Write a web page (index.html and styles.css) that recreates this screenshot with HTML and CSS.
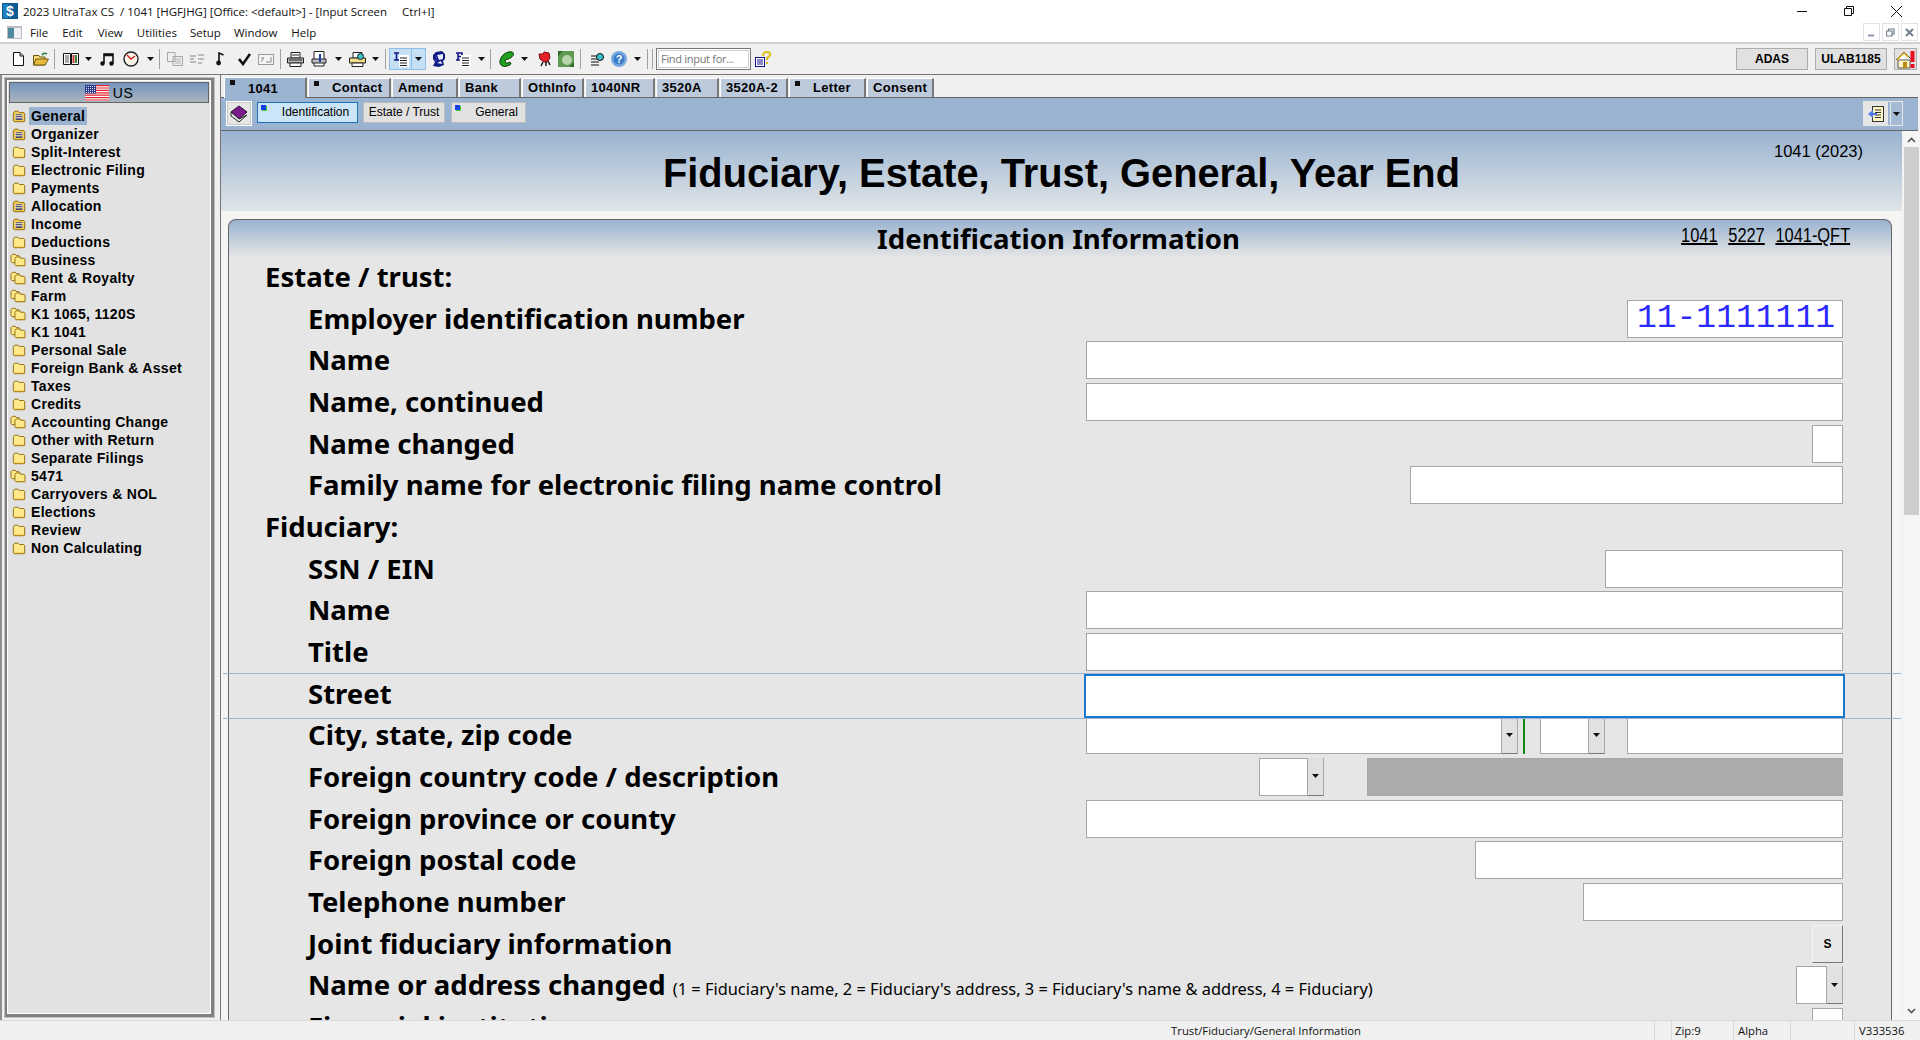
FILE: index.html
```html
<!DOCTYPE html>
<html lang="en">
<head>
    <meta charset="UTF-8">
    <title>2023 UltraTax CS / 1041 [HGFJHG]</title>
    <link rel="stylesheet" href="styles.css">
</head>
<body>
    <svg class="defs" width="0" height="0">
        <symbol id="folder-plain" viewBox="0 0 16 16">
            <path d="M1.5 4.5 L3 2.5 H7 L8.5 4 H13.5 L14.5 5 V14 L13.5 14.5 H2.5 L1.5 13.5 Z" fill="#ffe98a" stroke="#8a6400"/>
            <path d="M2.5 13.5 H14.5 V14.5 H2.5 Z" fill="#b88a10"/>
        </symbol>
        <symbol id="folder-doc" viewBox="0 0 16 16">
            <path d="M1.5 4.5 L3 2.5 H7 L8.5 4 H13.5 L14.5 5 V14 L13.5 14.5 H2.5 L1.5 13.5 Z" fill="#f2c84a" stroke="#8a6400"/>
            <path d="M3.5 5.5 H12.5 V12.5 H3.5 Z" fill="#fff6c8"/>
            <path d="M4 6.5 H12 M4 8.5 H12 M4 10.5 H12 M4 12 H12" stroke="#30306a"/>
        </symbol>
        <symbol id="folder-multi" viewBox="0 0 18 16">
            <path d="M1 3 L2.5 1.5 H6 L7 3 H10 L11 4 V11 H2 L1 10 Z" fill="#ffe98a" stroke="#8a6400"/>
            <path d="M5.5 6 L7 4.5 H11 L12 6 H16 L17 7 V14.5 H6.5 L5.5 13.5 Z" fill="#ffe98a" stroke="#8a6400"/>
            <path d="M6.5 14 H17 V15 H6.5 Z" fill="#b88a10"/>
        </symbol>
        <symbol id="caret" viewBox="0 0 7 4">
            <path d="M0 0 H7 L3.5 4 Z" fill="#111"/>
        </symbol>
    </svg>

    <div class="titlebar">
        <svg class="app-icon" width="16" height="16" viewBox="0 0 16 16"><rect width="16" height="16" fill="#0f5c94"/><rect x="1" y="1" width="5" height="14" fill="#1c7fc0"/><text x="8" y="13" class="app-s">$</text></svg>
        <span class="title-text">2023 UltraTax CS &nbsp;/ 1041 [HGFJHG] [Office: &lt;default&gt;] - [Input Screen &nbsp; &nbsp; Ctrl+I]</span>
        <div class="win-btns">
            <svg width="11" height="11" viewBox="0 0 11 11"><path d="M0 5.5 H10" stroke="#111"/></svg>
            <svg width="11" height="11" viewBox="0 0 11 11"><path d="M.5 2.5 H7.5 V9.5 H.5 Z M2.5 2.5 V.5 H9.5 V7.5 H7.5" fill="none" stroke="#111"/></svg>
            <svg width="11" height="11" viewBox="0 0 11 11"><path d="M0 0 L11 11 M11 0 L0 11" stroke="#111"/></svg>
        </div>
    </div>

    <div class="menubar">
        <svg class="mdi-icon" width="15" height="13" viewBox="0 0 15 13"><rect width="15" height="13" fill="#b9bcc4"/><rect x="1" y="2" width="6" height="10" fill="#4f8a9c"/><rect x="7" y="2" width="7" height="10" fill="#eef0f4"/></svg>
        <span class="menu m1">File</span>
        <span class="menu m2">Edit</span>
        <span class="menu m3">View</span>
        <span class="menu m4">Utilities</span>
        <span class="menu m5">Setup</span>
        <span class="menu m6">Window</span>
        <span class="menu m7">Help</span>
        <div class="mdi-btns">
            <span class="mdi-btn"><svg width="9" height="9" viewBox="0 0 9 9"><path d="M1 7.5 H7" stroke="#8a97a8" stroke-width="2"/></svg></span>
            <span class="mdi-btn"><svg width="9" height="9" viewBox="0 0 9 9"><path d="M.5 3 H6 V8 H.5 Z M2.5 3 V1 H8 V6 H6" fill="none" stroke="#6f7d90" stroke-width="1.2"/></svg></span>
            <span class="mdi-btn"><svg width="9" height="9" viewBox="0 0 9 9"><path d="M1 1 L8 8 M8 1 L1 8" stroke="#6f7d90" stroke-width="2"/></svg></span>
        </div>
    </div>

    <div class="toolbar">
        <svg class="tool" width="14" height="14" viewBox="0 0 14 14"><path d="M2.5 .5 H9 L12.5 4 V13.5 H2.5 Z" fill="#fff" stroke="#111"/><path d="M9 .5 V4 H12.5" fill="none" stroke="#111"/></svg>
        <svg class="tool g8" width="16" height="14" viewBox="0 0 16 14"><path d="M.5 3.5 H6 L7 5 H12 V13 H.5 Z" fill="#f7d772" stroke="#6b5a10"/><path d="M.5 13 L3 7 H15.5 L12 13 Z" fill="#e9b93c" stroke="#6b5a10"/><path d="M9 3 Q11 0 14 2" fill="none" stroke="#1a7a2c" stroke-width="1.5"/></svg>
        <i class="sep g5"></i>
        <svg class="tool g8" width="16" height="14" viewBox="0 0 16 14"><path d="M.5 1.5 H7.5 V12.5 H.5 Z M8.5 1.5 H15.5 V12.5 H8.5 Z" fill="#fff" stroke="#111"/><path d="M2 4 H6 M2 6 H6 M2 8 H6 M2 10 H6" stroke="#555"/><path d="M13 3 V11" stroke="#3a8a3a" stroke-width="2"/><path d="M10.5 3 V11" stroke="#c33" stroke-width="2"/></svg>
        <svg class="caret g6" width="7" height="4"><use href="#caret"/></svg>
        <svg class="tool g8" width="14" height="14" viewBox="0 0 14 14"><path d="M4 11 V2 H13 V11" fill="none" stroke="#111" stroke-width="1.6"/><circle cx="2.5" cy="11.5" r="2.2" fill="#111"/><circle cx="11.5" cy="11.5" r="2.2" fill="#111"/><path d="M4 3 H13" stroke="#111" stroke-width="2.5"/></svg>
        <svg class="tool g9" width="16" height="16" viewBox="0 0 16 16"><circle cx="8" cy="8" r="7" fill="#fff4e8" stroke="#222" stroke-width="1.4"/><path d="M4 4 L8 8 L12 5" fill="none" stroke="#c22" stroke-width="1.4"/></svg>
        <svg class="caret g8" width="7" height="4"><use href="#caret"/></svg>
        <i class="sep g5"></i>
        <svg class="tool g7" width="16" height="14" viewBox="0 0 16 14"><path d="M.5 .5 H8 V9.5 H.5 Z M6 4.5 H15.5 V13.5 H6 Z" fill="#f0f0f0" stroke="#a5a5a5"/><path d="M8 7 H14 M8 9 H14 M8 11 H14" stroke="#b5b5b5"/></svg>
        <svg class="tool g6" width="16" height="14" viewBox="0 0 16 14"><path d="M1 4 H7 M1 7 H5 M1 10 H7 M9 7 H15 M9 3 H15 M9 11 H13" stroke="#a8a8a8" stroke-width="1.3"/></svg>
        <svg class="tool g11" width="8" height="14" viewBox="0 0 8 14"><path d="M3 11 V1 L7.5 3" fill="none" stroke="#111" stroke-width="1.6"/><circle cx="2.6" cy="11" r="2.4" fill="#111"/></svg>
        <svg class="tool g14" width="13" height="14" viewBox="0 0 13 14"><path d="M1 7 L5 12 L12 2" fill="none" stroke="#111" stroke-width="2.6"/></svg>
        <svg class="tool g7" width="16" height="13" viewBox="0 0 16 13"><rect x=".5" y="1.5" width="15" height="10" fill="#f4f4f4" stroke="#9a9a9a"/><path d="M3 9 L6 5 H3 M13 4 V9 H8" fill="none" stroke="#8a8a8a"/></svg>
        <i class="sep g6"></i>
        <svg class="tool g6" width="17" height="15" viewBox="0 0 17 15"><path d="M4 .5 H13 V6 H4 Z" fill="#fff" stroke="#222"/><path d="M.5 6 H16.5 V11 H.5 Z" fill="#bbb" stroke="#222"/><path d="M3 11 H14 V14.5 H3 Z" fill="#fff" stroke="#222"/><path d="M5 3 H12 M2 8 H15" stroke="#222"/></svg>
        <svg class="tool g7" width="16" height="16" viewBox="0 0 16 16"><path d="M3 .5 H13 V15 H3 Z" fill="#fff" stroke="#222"/><path d="M1 8 H15 V12 H1 Z" fill="#bbb" stroke="#222"/><path d="M9 3 V11" stroke="#1a3ca8" stroke-width="2"/></svg>
        <svg class="caret g8" width="7" height="4"><use href="#caret"/></svg>
        <svg class="tool g7" width="17" height="15" viewBox="0 0 17 15"><path d="M4 .5 H13 V6 H4 Z" fill="#fff" stroke="#222"/><path d="M.5 6 H16.5 V11 H.5 Z" fill="#f2dc8c" stroke="#222"/><path d="M3 11 H14 V14.5 H3 Z" fill="#fff" stroke="#222"/><circle cx="11.5" cy="4.5" r="3" fill="#3cc3c8" stroke="#222"/></svg>
        <svg class="caret g6" width="7" height="4"><use href="#caret"/></svg>
        <i class="sep g6"></i>
        <div class="toggle g3">
            <span class="toggle-main">
                <svg width="16" height="16" viewBox="0 0 16 16"><rect x="6" y="4" width="10" height="12" fill="#fff"/><path d="M1 2 H6 M3.5 2 V9 M1 9 H6" stroke="#14148c" stroke-width="1.6"/><path d="M7 7 H14 M7 9.5 H14 M7 12 H14 M7 14.5 H14" stroke="#222"/></svg>
            </span>
            <span class="toggle-arrow"><svg width="7" height="4"><use href="#caret"/></svg></span>
        </div>
        <svg class="tool g6" width="14" height="16" viewBox="0 0 14 16"><path d="M4 1 L10 0 L13 3 L13 8 L11 10 L12 14 L7 16 L1 15 L3 11 L1 8 L1 4 Z" fill="#101a80"/><path d="M5 4 L11 3 L11 8 L7 9 Z M5 12 L9 10 L10 13 Z" fill="#e8ecff"/><path d="M3 6 L5 7 M3 9 L5 10" stroke="#4a5ad8"/></svg>
        <svg class="tool g9" width="16" height="16" viewBox="0 0 16 16"><rect x="6" y="4" width="10" height="12" fill="#fff"/><path d="M1 2 H7 V4 M3 2 V9 M1 9 H5 M3 5.5 H6" fill="none" stroke="#14148c" stroke-width="1.6"/><path d="M7 7 H14 M7 9.5 H14 M7 12 H14 M7 14.5 H14" stroke="#222"/></svg>
        <svg class="caret g7" width="7" height="4"><use href="#caret"/></svg>
        <i class="sep g5"></i>
        <svg class="tool g8" width="16" height="16" viewBox="0 0 16 16"><path d="M1 10 C2 4 8 0 13 1 C16 2 15 7 6 9 C6 12 8 13 11 11 L12 13 C7 17 0 16 1 10 Z" fill="#1fa01f" stroke="#0a3c0a"/></svg>
        <svg class="caret g6" width="7" height="4"><use href="#caret"/></svg>
        <svg class="tool g10" width="13" height="16" viewBox="0 0 13 16"><path d="M1 3 L5 3 L6 1 L11 2 L12 7 L9 11 L6 11 L2 8 Z" fill="#e3202a" stroke="#7a0b10"/><path d="M5 11 L3 15 M8 11 L8 15 M10 10 L12 14" stroke="#111" stroke-width="1.4"/></svg>
        <svg class="tool g7" width="16" height="16" viewBox="0 0 16 16"><rect width="16" height="16" fill="#5d9a52"/><circle cx="9" cy="9" r="5" fill="#b7d4ac"/><path d="M0 0 H5 L0 5 Z M16 16 H11 L16 11 Z" fill="#2c6a2a"/></svg>
        <i class="sep g6"></i>
        <svg class="tool g9" width="15" height="15" viewBox="0 0 15 15"><path d="M1 4 H8 M1 7 H8 M1 10 H9 M1 13 H9" stroke="#111"/><circle cx="10" cy="5" r="3.5" fill="#3cc3c8" stroke="#111"/></svg>
        <svg class="tool g6" width="16" height="16" viewBox="0 0 16 16"><circle cx="8" cy="8" r="8" fill="#7aa8e0"/><circle cx="8" cy="8" r="5.5" fill="#3a7cc8"/><text x="8" y="12" class="help-q">?</text></svg>
        <svg class="caret g7" width="7" height="4"><use href="#caret"/></svg>
        <i class="sep g6"></i>
        <i class="sep g4"></i>
        <div class="find g3"><span class="find-inner">Find input for...</span></div>
        <svg class="tool g4" width="17" height="16" viewBox="0 0 17 16"><rect x=".5" y="6.5" width="9" height="9" fill="#fff" stroke="#14148c"/><path d="M2 9 H8 M2 11 H8 M2 13 H8" stroke="#14148c"/><path d="M8 5 Q8 1 12 1 Q16 1 15 4 Q14 6 12 7 V9 M12 11 V13" fill="none" stroke="#e0c020" stroke-width="2"/></svg>
        <div class="tool-right">
            <span class="user-btn">ADAS</span>
            <span class="user-btn">ULAB1185</span>
            <span class="home-btn">
                <svg width="21" height="19" viewBox="0 0 21 19"><path d="M1 10 L9 2 L17 10" fill="#fff" stroke="#333"/><path d="M3 10 H15 V18 H3 Z" fill="#fff6c8" stroke="#555"/><rect x="8" y="12" width="4" height="6" fill="#b88a10"/><path d="M2 10 L9 3 L13 7" fill="none" stroke="#e8b820" stroke-width="1.5"/><rect x="15.5" y="1" width="4" height="11" fill="#e81020"/><rect x="15.5" y="14" width="4" height="4" fill="#e81020"/></svg>
            </span>
        </div>
    </div>

    <div class="main">
        <aside class="side">
            <div class="side-inner">
                <div class="side-head">
                    <svg width="24" height="16" viewBox="0 0 24 16">
                        <rect width="24" height="16" fill="#fff"/>
                        <path d="M0 .6 H24 M0 3 H24 M0 5.4 H24 M0 7.8 H24 M0 10.2 H24 M0 12.6 H24 M0 15 H24" stroke="#e0202c" stroke-width="1.2"/>
                        <rect width="11" height="8.5" fill="#2c3a8c"/>
                        <path d="M1 1.5 H10 M1 3.5 H10 M1 5.5 H10 M1 7.5 H10" stroke="#dfe3f5" stroke-dasharray="1 1"/>
                    </svg>
                    <span>US</span>
                </div>
                <ul class="tree">
                    <li><svg width="14" height="14"><use href="#folder-doc"/></svg><span class="sel">General</span></li>
                    <li><svg width="14" height="14"><use href="#folder-doc"/></svg><span>Organizer</span></li>
                    <li><svg width="14" height="14"><use href="#folder-plain"/></svg><span>Split-Interest</span></li>
                    <li><svg width="14" height="14"><use href="#folder-plain"/></svg><span>Electronic Filing</span></li>
                    <li><svg width="14" height="14"><use href="#folder-plain"/></svg><span>Payments</span></li>
                    <li><svg width="14" height="14"><use href="#folder-doc"/></svg><span>Allocation</span></li>
                    <li><svg width="14" height="14"><use href="#folder-doc"/></svg><span>Income</span></li>
                    <li><svg width="14" height="14"><use href="#folder-plain"/></svg><span>Deductions</span></li>
                    <li class="multi"><svg width="16" height="14"><use href="#folder-multi"/></svg><span>Business</span></li>
                    <li class="multi"><svg width="16" height="14"><use href="#folder-multi"/></svg><span>Rent &amp; Royalty</span></li>
                    <li class="multi"><svg width="16" height="14"><use href="#folder-multi"/></svg><span>Farm</span></li>
                    <li class="multi"><svg width="16" height="14"><use href="#folder-multi"/></svg><span>K1 1065, 1120S</span></li>
                    <li class="multi"><svg width="16" height="14"><use href="#folder-multi"/></svg><span>K1 1041</span></li>
                    <li><svg width="14" height="14"><use href="#folder-plain"/></svg><span>Personal Sale</span></li>
                    <li><svg width="14" height="14"><use href="#folder-plain"/></svg><span>Foreign Bank &amp; Asset</span></li>
                    <li><svg width="14" height="14"><use href="#folder-plain"/></svg><span>Taxes</span></li>
                    <li><svg width="14" height="14"><use href="#folder-plain"/></svg><span>Credits</span></li>
                    <li class="multi"><svg width="16" height="14"><use href="#folder-multi"/></svg><span>Accounting Change</span></li>
                    <li><svg width="14" height="14"><use href="#folder-plain"/></svg><span>Other with Return</span></li>
                    <li><svg width="14" height="14"><use href="#folder-plain"/></svg><span>Separate Filings</span></li>
                    <li class="multi"><svg width="16" height="14"><use href="#folder-multi"/></svg><span>5471</span></li>
                    <li><svg width="14" height="14"><use href="#folder-plain"/></svg><span>Carryovers &amp; NOL</span></li>
                    <li><svg width="14" height="14"><use href="#folder-plain"/></svg><span>Elections</span></li>
                    <li><svg width="14" height="14"><use href="#folder-plain"/></svg><span>Review</span></li>
                    <li><svg width="14" height="14"><use href="#folder-plain"/></svg><span>Non Calculating</span></li>
                </ul>
            </div>
        </aside>

        <section class="work">
            <div class="tabs">
                <span class="tab active tab-1041 marked">1041</span>
                <span class="tab tab-contact marked">Contact</span>
                <span class="tab tab-amend">Amend</span>
                <span class="tab tab-bank">Bank</span>
                <span class="tab tab-oth">OthInfo</span>
                <span class="tab tab-nr">1040NR</span>
                <span class="tab tab-a">3520A</span>
                <span class="tab tab-a2">3520A-2</span>
                <span class="tab tab-letter marked">Letter</span>
                <span class="tab tab-consent">Consent</span>
            </div>
            <div class="band">
                <span class="book-btn">
                    <svg width="18" height="18" viewBox="0 0 18 18"><path d="M1 7 L9 1 L17 7 L9 14 Z" fill="#7a1a8c" stroke="#2a0a30"/><path d="M1 7 V11 L9 17 L17 10 L9 14 Z" fill="#e8e8e8" stroke="#222"/></svg>
                </span>
                <span class="sub active marked-sub">Identification</span>
                <span class="sub sub-estate">Estate / Trust</span>
                <span class="sub sub-general marked-sub">General</span>
                <div class="band-right">
                    <span class="doc-btn">
                        <svg width="16" height="16" viewBox="0 0 16 16"><rect x="4.5" y=".5" width="11" height="15" fill="#fff6c8" stroke="#333"/><path d="M7 4 H13 M7 6.5 H13 M7 9 H13 M7 11.5 H13" stroke="#333"/><path d="M0 8 L5 4 V12 Z M4 7 H9 V9 H4 Z" fill="#4a78e8"/></svg>
                    </span>
                    <span class="doc-arrow"><svg width="7" height="4"><use href="#caret"/></svg></span>
                </div>
            </div>
            <div class="content">
                <div class="form-area">
                    <div class="page-head">
                        <h1>Fiduciary, Estate, Trust, General, Year End</h1>
                        <span class="form-year">1041 (2023)</span>
                    </div>
                    <div class="card">
                        <div class="card-head">
                            <h2>Identification Information</h2>
                            <div class="form-links"><a>1041</a><a>5227</a><a>1041-QFT</a></div>
                        </div>
                        <div class="rows">
                            <div class="row"><span class="group-label">Estate / trust:</span></div>
                            <div class="row"><span class="label">Employer identification number</span><span class="field w-ein ein">11-1111111</span></div>
                            <div class="row"><span class="label">Name</span><span class="field w-full"></span></div>
                            <div class="row"><span class="label">Name, continued</span><span class="field w-full"></span></div>
                            <div class="row"><span class="label">Name changed</span><span class="field w-check"></span></div>
                            <div class="row"><span class="label">Family name for electronic filing name control</span><span class="field w-family"></span></div>
                            <div class="row"><span class="group-label">Fiduciary:</span></div>
                            <div class="row"><span class="label">SSN / EIN</span><span class="field w-ssn"></span></div>
                            <div class="row"><span class="label">Name</span><span class="field w-full"></span></div>
                            <div class="row"><span class="label">Title</span><span class="field w-full"></span></div>
                            <div class="row focused"><span class="label">Street</span><span class="field w-focus"></span></div>
                            <div class="row"><span class="label">City, state, zip code</span>
                                <div class="city">
                                    <span class="combo"><span class="field w-city"></span><span class="arrow"><svg width="7" height="4"><use href="#caret"/></svg></span></span>
                                    <i class="green-line"></i>
                                    <span class="combo state"><span class="field w-state"></span><span class="arrow"><svg width="7" height="4"><use href="#caret"/></svg></span></span>
                                    <span class="field w-zip"></span>
                                </div>
                            </div>
                            <div class="row"><span class="label">Foreign country code / description</span>
                                <div class="city">
                                    <span class="combo"><span class="field w-state"></span><span class="arrow"><svg width="7" height="4"><use href="#caret"/></svg></span></span>
                                    <span class="grey-field"></span>
                                </div>
                            </div>
                            <div class="row"><span class="label">Foreign province or county</span><span class="field w-full"></span></div>
                            <div class="row"><span class="label">Foreign postal code</span><span class="field w-postal"></span></div>
                            <div class="row"><span class="label">Telephone number</span><span class="field w-phone"></span></div>
                            <div class="row"><span class="label">Joint fiduciary information</span><span class="s-btn">S</span></div>
                            <div class="row"><span class="label">Name or address changed <small>(1 = Fiduciary's name, 2 = Fiduciary's address, 3 = Fiduciary's name &amp; address, 4 = Fiduciary)</small></span>
                                <span class="combo"><span class="field w-small"></span><span class="arrow"><svg width="7" height="4"><use href="#caret"/></svg></span></span>
                            </div>
                            <div class="row"><span class="label">Financial institution</span><span class="field w-check"></span></div>
                        </div>
                    </div>
                </div>
                <div class="scrollbar">
                    <svg width="9" height="6" viewBox="0 0 9 6"><path d="M1 5 L4.5 1.5 L8 5" fill="none" stroke="#555" stroke-width="1.6"/></svg>
                    <div class="thumb"></div>
                    <svg class="scroll-down" width="9" height="6" viewBox="0 0 9 6"><path d="M1 1 L4.5 4.5 L8 1" fill="none" stroke="#555" stroke-width="1.6"/></svg>
                </div>
            </div>
        </section>
    </div>

    <div class="statusbar">
        <span class="st st-path">Trust/Fiduciary/General Information</span>
        <span class="st st-blank"></span>
        <span class="st st-zip">Zip:9</span>
        <span class="st st-alpha">Alpha</span>
        <span class="st st-blank2"></span>
        <span class="st st-ver">V333536</span>
    </div>
</body>
</html>
```

FILE: styles.css
```css
/* Global */
* {
    box-sizing: border-box;
}
html, body {
    margin: 0;
    padding: 0;
    height: 1040px;
    overflow: hidden;
}
body {
    display: flex;
    flex-direction: column;
    width: 1920px;
    font-family: "Liberation Sans", Arial, sans-serif;
    background: #f0f0f0;
    color: #000;
}
.defs {
    position: absolute;
}

/* Title and menu */
.titlebar {
    height: 22px;
    background: #fff;
    display: flex;
    align-items: center;
    padding-left: 2px;
    flex: none;
}
.app-s {
    font: bold 14px "Liberation Sans", sans-serif;
    fill: #fff;
    text-anchor: middle;
}
.help-q {
    font: bold 11px "Liberation Sans", sans-serif;
    fill: #fff;
    text-anchor: middle;
}
.title-text {
    margin-left: 5px;
    font: 11.5px "Open Sans", sans-serif;
    white-space: nowrap;
    color: #111;
}
.win-btns {
    margin-left: auto;
    display: flex;
    gap: 36px;
    padding-right: 18px;
}
.menubar {
    height: 20px;
    background: #fff;
    display: flex;
    align-items: center;
    flex: none;
    font: 11.5px "Open Sans", sans-serif;
}
.mdi-icon {
    margin-left: 7px;
}
.menu {
    color: #111;
}
.m1 { margin-left: 8px; }
.m2 { margin-left: 14px; }
.m3 { margin-left: 15px; }
.m4 { margin-left: 14px; }
.m5 { margin-left: 13px; }
.m6 { margin-left: 13px; }
.m7 { margin-left: 14px; }
.mdi-btns {
    margin-left: auto;
    display: flex;
    gap: 2px;
    padding-right: 2px;
}
.mdi-btn {
    width: 17px;
    height: 18px;
    border: 1px solid #dfe3e8;
    background: #fff;
    display: flex;
    align-items: center;
    justify-content: center;
}

/* Toolbar */
.toolbar {
    height: 33px;
    flex: none;
    background: #f0f0f0;
    border-top: 2px solid #d0d0d0;
    border-bottom: 1px solid #777;
    display: flex;
    align-items: center;
    padding-left: 11px;
}
.tool, .caret, .sep, .toggle, .find {
    flex: none;
}
.sep {
    width: 1px;
    height: 20px;
    background: #a0a0a0;
}
.g3 { margin-left: 3px; }
.g4 { margin-left: 4px; }
.g5 { margin-left: 5px; }
.g6 { margin-left: 6px; }
.g7 { margin-left: 7px; }
.g8 { margin-left: 8px; }
.g9 { margin-left: 9px; }
.g10 { margin-left: 10px; }
.g11 { margin-left: 11px; }
.g14 { margin-left: 14px; }
.toggle {
    width: 37px;
    height: 22px;
    display: flex;
    background: #c5dff5;
    border: 1px solid #8ebde8;
}
.toggle-main {
    width: 22px;
    display: flex;
    align-items: center;
    justify-content: center;
    border-right: 1px solid #8ebde8;
}
.toggle-arrow {
    flex: 1;
    display: flex;
    align-items: center;
    justify-content: center;
}
.find {
    width: 95px;
    height: 22px;
    border: 1px solid #777;
    padding: 1px;
    background: #fff;
}
.find-inner {
    display: block;
    height: 18px;
    border: 1px solid #cfcfcf;
    font: 11px/16px "Open Sans", sans-serif;
    letter-spacing: -.3px;
    color: #777;
    padding-left: 2px;
    white-space: nowrap;
    overflow: hidden;
}
.tool-right {
    margin-left: auto;
    display: flex;
    gap: 7px;
    padding-right: 3px;
}
.user-btn {
    width: 72px;
    height: 22px;
    background: #e1e1e1;
    border: 1px solid #adadad;
    font-weight: bold;
    font-size: 12px;
    line-height: 20px;
    text-align: center;
}
.home-btn {
    width: 23px;
    height: 22px;
    background: #e1e1e1;
    border: 1px solid #adadad;
    display: flex;
    align-items: center;
    justify-content: center;
}

/* Main split */
.main {
    flex: 1;
    display: flex;
    min-height: 0;
}
.side {
    width: 221px;
    flex: none;
    padding: 3px 0;
    border-left: 2px solid #909090;
    border-right: 1px solid #777;
}
.side-inner {
    height: 100%;
    width: 209px;
    margin-left: 3px;
    border: 2px solid #808080;
    border-right-width: 3px;
    border-bottom-width: 3px;
    outline: 1px solid #c0c0c0;
    background: #e2e2e2;
    box-shadow: inset 0 0 0 1px #fff;
}
.side-head {
    margin: 2px 2px 0;
    height: 21px;
    display: flex;
    align-items: center;
    justify-content: center;
    gap: 4px;
    background: linear-gradient(#7596c0, #a9b3bd);
    border: 1px solid #666;
    font-size: 14px;
    letter-spacing: .6px;
}
.tree {
    list-style: none;
    margin: 4px 0 0;
    padding: 0 0 0 3px;
}
.tree li {
    height: 18px;
    display: flex;
    align-items: center;
    font-size: 14px;
    font-weight: bold;
    letter-spacing: .3px;
    white-space: nowrap;
}
.tree li svg {
    margin-left: 2px;
    margin-right: 3px;
}
.tree li.multi svg {
    margin-left: 0;
}
.tree li span {
    padding: 0 2px;
    line-height: 18px;
}
.tree .sel {
    background: #9ab3d0;
}

/* Tabs */
.work {
    flex: 1;
    min-width: 0;
    display: flex;
    flex-direction: column;
}
.tabs {
    height: 22px;
    flex: none;
    display: flex;
    align-items: flex-end;
    gap: 1px;
    padding-left: 3px;
    font-size: 13px;
    font-weight: bold;
}
.tab {
    position: relative;
    height: 19px;
    background: #bccadb;
    border-right: 2px solid #777;
    border-left: 1px solid #fff;
    border-top: 1px solid #fff;
    line-height: 18px;
    padding-left: 5px;
    letter-spacing: .3px;
    white-space: nowrap;
}
.tab.marked {
    padding-left: 23px;
}
.tab.marked::before {
    content: "";
    position: absolute;
    left: 5px;
    top: 2px;
    width: 5px;
    height: 5px;
    background: #111;
}
.tab.active {
    background: #9ab3d0;
    height: 21px;
    line-height: 21px;
    z-index: 1;
    margin-bottom: -1px;
}
.tab-1041 { width: 83px; }
.tab-contact { width: 83px; }
.tab-amend { width: 66px; }
.tab-bank { width: 62px; }
.tab-oth { width: 62px; }
.tab-nr { width: 70px; }
.tab-a { width: 63px; }
.tab-a2 { width: 68px; }
.tab-letter { width: 77px; }
.tab-consent { width: 67px; }

/* Blue band with sub tabs */
.band {
    height: 34px;
    flex: none;
    background: #9ab3d0;
    border-top: 1px solid #666;
    border-bottom: 1px solid #666;
    display: flex;
    align-items: flex-start;
    padding: 3px 0 0 5px;
    margin-right: 2px;
    font: 12px "Liberation Sans", sans-serif;
}
.book-btn {
    width: 26px;
    height: 25px;
    background: #e6e6e6;
    border: 1px solid #fff;
    outline: 1px solid #c8c8c8;
    outline-offset: -2px;
    display: flex;
    align-items: center;
    justify-content: center;
}
.sub {
    position: relative;
    height: 21px;
    margin: 1px 0 0 5px;
    background: #e1e1e1;
    border: 1px solid #bcbcbc;
    line-height: 19px;
    text-align: center;
}
.sub.active {
    width: 101px;
    background: #cbe4f8;
    border-color: #1a72b8;
    padding-left: 16px;
}
.sub-estate { width: 82px; }
.sub-general { width: 75px; padding-left: 16px; margin-left: 6px; }
.marked-sub::before {
    content: "";
    position: absolute;
    left: 3px;
    top: 2px;
    width: 5px;
    height: 5px;
    background: #1a3cf0;
    box-shadow: 1px 1px 0 #3ccf3c;
}
.band-right {
    margin-left: auto;
    display: flex;
    margin-right: 15px;
    border: 1px solid #e6e6e6;
}
.doc-btn {
    width: 24px;
    height: 23px;
    background: #e6e6e6;
    display: flex;
    align-items: center;
    justify-content: center;
}
.doc-arrow {
    width: 12px;
    height: 23px;
    margin-left: 2px;
    background: #a5bad3;
    border-left: 1px solid #e6e6e6;
    display: flex;
    align-items: center;
    justify-content: center;
}

/* Form */
.content {
    flex: 1;
    min-height: 0;
    display: flex;
}
.form-area {
    flex: 1;
    min-width: 0;
    background: #f5f5f5;
    overflow: hidden;
    display: flex;
    flex-direction: column;
}
.page-head {
    position: relative;
    height: 80px;
    flex: none;
    background: linear-gradient(#9ab3d0, #e0e5e8);
    text-align: center;
}
.page-head h1 {
    margin: 0;
    padding-top: 19px;
    font-size: 39.8px;
    line-height: 46px;
    font-weight: bold;
    white-space: nowrap;
}
.form-year {
    position: absolute;
    right: 39px;
    top: 10px;
    font-size: 16.5px;
    line-height: 20px;
}
.card {
    flex: 1;
    margin: 8px 10px 0 7px;
    border: 1px solid #666;
    border-bottom: 0;
    border-radius: 8px 8px 0 0;
    background: linear-gradient(#9ab3d0, #e6e6e6 38px);
    min-height: 0;
}
.card-head {
    position: relative;
    height: 38px;
    text-align: center;
}
.card-head h2 {
    margin: 0;
    padding-right: 3px;
    font: bold 27.6px/36px "Noto Sans", sans-serif;
}
.form-links {
    position: absolute;
    right: 41px;
    top: 4px;
    display: flex;
    gap: 13px;
    font: 20px/22px "Liberation Sans", sans-serif;
    transform: scaleX(.82);
    transform-origin: right center;
}
.form-links a {
    text-decoration: underline;
}
.rows {
    display: grid;
    grid-auto-rows: 41.67px;
    padding: 0 48px 0 36px;
}
.row {
    position: relative;
    display: flex;
    justify-content: space-between;
    align-items: flex-start;
}
.group-label {
    font: bold 27.5px/38px "Noto Sans", sans-serif;
}
.label {
    padding-left: 43px;
    font: bold 27.5px/38px "Noto Sans", sans-serif;
    white-space: nowrap;
}
.label small {
    font-size: 16.4px;
    font-weight: normal;
}
.focused {
    z-index: 2;
}
.focused::before {
    content: "";
    position: absolute;
    left: -42px;
    right: -58px;
    top: -2px;
    height: 44px;
    border-top: 1px solid #9ab3d0;
    border-bottom: 1px solid #9ab3d0;
}
.field {
    display: block;
    height: 38px;
    background: #fff;
    border: 1px solid #a6a6a6;
    flex: none;
}
.w-full { width: 757px; }
.w-ein { width: 216px; }
.w-check { width: 31px; }
.w-family { width: 433px; }
.w-ssn { width: 238px; }
.w-postal { width: 368px; }
.w-phone { width: 260px; }
.w-city { width: 416px; }
.w-state { width: 49px; }
.w-zip { width: 216px; }
.w-small { width: 31px; }
.w-focus {
    position: relative;
    width: 761px;
    height: 44px;
    margin: -1px -2px 0 0;
    border: 2px solid #1a78c8;
}
.ein {
    color: #2a2aff;
    font: 33px/36px "Liberation Mono", monospace;
    text-align: right;
    padding-right: 7px;
    white-space: nowrap;
}
.city {
    display: flex;
    align-items: flex-start;
}
.combo {
    display: flex;
    flex: none;
}
.arrow {
    width: 16px;
    height: 38px;
    background: #e1e1e1;
    border-right: 1px solid #a6a6a6;
    border-bottom: 1px solid #777;
    display: flex;
    align-items: center;
    justify-content: center;
}
.green-line {
    width: 2px;
    height: 38px;
    margin-left: 5px;
    background: #138a13;
}
.state {
    margin-left: 15px;
}
.w-zip {
    margin-left: 22px;
}
.grey-field {
    width: 476px;
    height: 38px;
    margin-left: 43px;
    background: #ababab;
    border: 1px solid #a6a6a6;
}
.s-btn {
    width: 31px;
    height: 38px;
    background: #e8e8e8;
    border: 1px solid #f5f5f5;
    border-right-color: #777;
    border-bottom-color: #777;
    font: bold 12px/36px "Liberation Sans", sans-serif;
    text-align: center;
}

/* Scrollbar */
.scrollbar {
    width: 17px;
    flex: none;
    position: relative;
    background: #f5f5f5;
    display: flex;
    flex-direction: column;
    align-items: center;
    padding-top: 6px;
    margin-left: 1px;
}
.thumb {
    width: 15px;
    height: 368px;
    margin-top: 4px;
    background: #cdcdcd;
}
.scroll-down {
    margin-top: auto;
    margin-bottom: 6px;
}

/* Status */
.statusbar {
    height: 20px;
    flex: none;
    border-top: 1px solid #d8d8d8;
    background: #f0f0f0;
    display: flex;
    font: 11.3px/19px "Open Sans", sans-serif;
    color: #111;
}
.st {
    white-space: nowrap;
    border-right: 1px solid #d8d8d8;
}
.st-path { width: 1655px; text-align: right; padding-right: 293px; }
.st-blank { width: 17px; }
.st-zip { width: 62px; padding-left: 3px; }
.st-alpha { width: 57px; padding-left: 4px; }
.st-blank2 { width: 64px; }
.st-ver { padding-left: 4px; border-right: 0; }
```
